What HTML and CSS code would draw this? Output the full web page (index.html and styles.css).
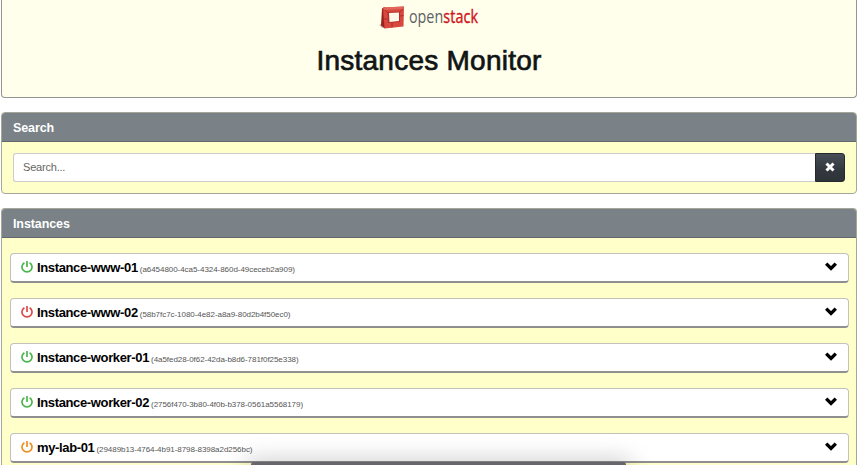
FILE: index.html
```html
<!DOCTYPE html>
<html lang="en">
<head>
<meta charset="utf-8">
<title>Instances Monitor</title>
<link rel="stylesheet" href="styles.css">
</head>
<body>
<svg class="symbols" aria-hidden="true">
  <symbol id="power" viewBox="0 0 12 12"><path d="M3.4 1.7A5 5 0 1 0 8.6 1.7M6 0V6" fill="none" stroke="currentColor" stroke-width="1.7"/></symbol>
  <symbol id="chevron" viewBox="0 0 12 9"><path d="M1.2 1.6L6 6.4L10.8 1.6" fill="none" stroke="currentColor" stroke-width="3.4"/></symbol>
</svg>
<header class="hero">
  <div class="logo">
    <svg class="cube" viewBox="0 0 28 24">
      <path d="M0 20L5 17L7 23L3 23Z" fill="#c9c5b4"/>
      <path d="M3 3.5L6 2V23.5L2 20.5Z" fill="#9b211b"/>
      <path d="M4 2.500L25 1.500L24.500 21.500L5.500 23.500Z" fill="#d8483f"/>
      <path d="M4 2.500L25 1.500L24 4L6 5Z" fill="#e0655b"/>
      <path d="M8.500 7L21 6.500V17L9 18Z" fill="#b3302a"/>
      <path d="M10 8L20 7.500V16L10.500 17Z" fill="#fff7ea"/>
      <path d="M4 14H8.500M21 11L24.500 10.500M13 18V22.500M6 5L9 8M24 4L21 7" stroke="#a82520" stroke-width=".8"/>
    </svg>
    <span class="wordmark">open<b>stack</b></span>
  </div>
  <h1>Instances Monitor</h1>
</header>
<section class="panel search">
  <h2>Search</h2>
  <div class="search-body">
    <input type="text" placeholder="Search...">
    <button type="button" aria-label="Clear"><svg viewBox="0 0 10 10"><path d="M1.5 1.5L8.5 8.5M8.5 1.5L1.5 8.5" stroke="#fff" stroke-width="3"/></svg></button>
  </div>
</section>
<section class="panel instances">
  <h2>Instances</h2>
  <div class="list">
    <div class="row"><svg class="power on"><use href="#power"/></svg><strong>Instance-www-01</strong><small>(a6454800-4ca5-4324-860d-49ceceb2a909)</small><svg class="chevron"><use href="#chevron"/></svg></div>
    <div class="row"><svg class="power off"><use href="#power"/></svg><strong>Instance-www-02</strong><small>(58b7fc7c-1080-4e82-a8a9-80d2b4f50ec0)</small><svg class="chevron"><use href="#chevron"/></svg></div>
    <div class="row"><svg class="power on"><use href="#power"/></svg><strong>Instance-worker-01</strong><small>(4a5fed28-0f62-42da-b8d6-781f0f25e338)</small><svg class="chevron"><use href="#chevron"/></svg></div>
    <div class="row"><svg class="power on"><use href="#power"/></svg><strong>Instance-worker-02</strong><small>(2756f470-3b80-4f0b-b378-0561a5568179)</small><svg class="chevron"><use href="#chevron"/></svg></div>
    <div class="row"><svg class="power paused"><use href="#power"/></svg><strong>my-lab-01</strong><small>(29489b13-4764-4b91-8798-8398a2d256bc)</small><svg class="chevron"><use href="#chevron"/></svg></div>
  </div>
</section>
<div class="dock"></div>
</body>
</html>
```

FILE: styles.css
```css
* { box-sizing: border-box; }
html, body { height: 100%; overflow: hidden; }
body { position: relative; margin: 0; padding: 0 0 0 1px; background: #fff; color: #000; font-family: "Liberation Sans", Arial, sans-serif; }
.symbols { position: absolute; width: 0; height: 0; }
.hero { height: 98px; border: 1px solid #949590; border-top: 0; border-radius: 0 0 4px 4px; background: #ffffec; text-align: center; }
.logo { display: flex; align-items: center; justify-content: center; height: 34px; }
.cube { width: 28px; height: 24px; margin-right: 2px; }
.wordmark { font: 18px/24px "Open Sans", sans-serif; color: #606164; display: block; width: 70px; transform: translateY(-1px) scaleX(.795); transform-origin: left; text-align: left; white-space: nowrap; }
.wordmark b { font-weight: 400; color: #d0141c; letter-spacing: .2px; -webkit-text-stroke: .4px #d0141c; }
h1 { margin: 11px 0 0; font-size: 28px; line-height: 32px; font-weight: 400; letter-spacing: .25px; color: #101414; -webkit-text-stroke: .7px #101414; }
.panel { margin-top: 14px; border: 1px solid #a5a69a; border-radius: 4px; background: #ffffca; overflow: hidden; }
.panel h2 { margin: 0; height: 29px; padding-left: 11px; background: #7a8288; border-bottom: 1px solid #62686d; color: #fff; font-size: 12.5px; line-height: 30px; font-weight: 700; letter-spacing: -.1px; }
.search { height: 82px; }
.search-body { display: flex; padding: 11px 11px 0; }
.search-body input { flex: 1; min-width: 0; height: 29px; border: 1px solid #ccc; border-right: 0; border-radius: 3px 0 0 3px; padding: 0 9px 2px; background: #fff; font: 11px "Liberation Sans", Arial, sans-serif; letter-spacing: -.2px; }
.search-body input::placeholder { color: #666; opacity: 1; }
.search-body button { display: grid; place-items: center; width: 30px; height: 29px; padding: 0 0 1px; border: 1px solid #24292d; border-radius: 0 3px 3px 0; background: linear-gradient(#484f56, #32383e 60%, #2e3338); }
.search-body button svg { width: 10px; height: 10px; }
.instances { height: 257px; border-bottom: 0; border-radius: 4px 4px 0 0; }
.list { display: grid; gap: 15px; padding: 15px 7px 0 8px; }
.row { display: flex; align-items: center; height: 30px; padding: 0 11px 0 10px; border: 1px solid #c2c2ba; border-bottom: 2px solid #8f8f8f; border-radius: 4px; background: #fff; }
.row strong { margin-left: 4px; font-size: 13px; line-height: 20px; letter-spacing: -.36px; white-space: nowrap; }
.row small { margin: 4px 0 0 2px; color: #555; font-size: 8px; line-height: 12px; letter-spacing: -.05px; white-space: nowrap; }
.power { width: 12px; height: 12px; margin-top: -1px; }
.on { color: #4cb54c; }
.off { color: #dc4b48; }
.paused { color: #ed9023; }
.chevron { width: 12px; height: 9px; margin-left: auto; margin-top: -2px; }
.dock { position: absolute; left: 251px; bottom: 0; width: 375px; height: 3px; border-radius: 4px 4px 0 0; background: #69656d; box-shadow: 0 6px 24px 6px rgba(0, 0, 0, .28); }
```
